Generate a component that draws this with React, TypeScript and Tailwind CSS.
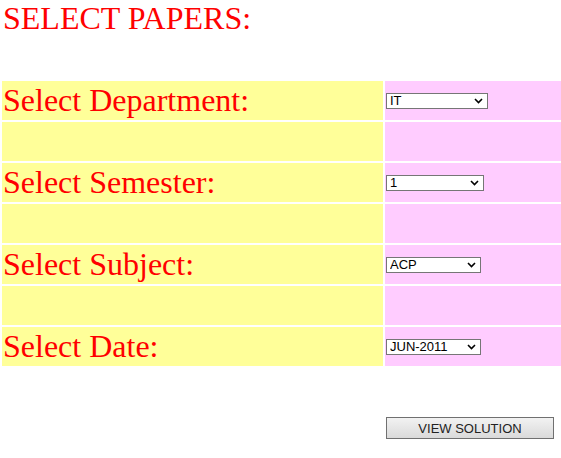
const rows = [
  { label: "Select Department:", value: "IT", options: ["IT", "CE", "EC", "ME"], w: "w-[102px]" },
  { label: "Select Semester:", value: "1", options: ["1", "2", "3", "4", "5", "6", "7", "8"], w: "w-[98px]" },
  { label: "Select Subject:", value: "ACP", options: ["ACP", "DBMS", "OS"], w: "w-[95px]" },
  { label: "Select Date:", value: "JUN-2011", options: ["JUN-2011", "DEC-2011"], w: "w-[95px]" },
];

function Dropdown({ value, options, w }: { value: string; options: string[]; w: string }) {
  return (
    <div className={`relative ${w} h-[16px]`}>
      <select
        defaultValue={value}
        className="block appearance-none w-full h-[16px] border border-[#767676] bg-white pl-[3px] pr-4 py-0 text-[13px] leading-[14px] text-black outline-none"
        style={{ fontFamily: '"Liberation Sans", Arial, sans-serif' }}
      >
        {options.map((o) => (
          <option key={o}>{o}</option>
        ))}
      </select>
      <svg
        className="absolute right-[5px] top-[5px] pointer-events-none"
        width="9"
        height="6"
        viewBox="0 0 9 6"
      >
        <polyline points="1,1 4.5,4.5 8,1" fill="none" stroke="#000" strokeWidth="1.6" />
      </svg>
    </div>
  );
}

export default function App() {
  return (
    <div className="w-[561px] overflow-hidden bg-white" style={{ fontFamily: '"Liberation Serif", "Times New Roman", serif' }}>
      <h1 className="text-[32px] leading-[37px] text-[#ff0000] pl-[3px]">SELECT PAPERS:</h1>
      <table className="mt-[42px] w-[563px] border-separate border-spacing-[2px]">
        <tbody>
          {rows.map((r) => (
            <>
              <tr key={r.label} className="h-[39px]">
                <td className="w-[381px] bg-[#ffff99] p-0 pl-[1px] align-middle text-[32px] leading-[37px] text-[#ff0000]">
                  {r.label}
                </td>
                <td className="bg-[#ffccff] p-0 pl-[1px] align-middle">
                  <Dropdown value={r.value} options={r.options} w={r.w} />
                </td>
              </tr>
              {r.label !== "Select Date:" && (
                <tr key={r.label + "-gap"} className="h-[39px]">
                  <td className="bg-[#ffff99] p-0"></td>
                  <td className="bg-[#ffccff] p-0"></td>
                </tr>
              )}
            </>
          ))}
          <tr className="h-[39px]">
            <td className="p-0"></td>
            <td className="p-0"></td>
          </tr>
          <tr className="h-[38px]">
            <td className="p-0"></td>
            <td className="p-0 pl-[1px] align-middle">
              <button
                className="block w-[168px] h-[22px] border border-[#707070] bg-gradient-to-b from-[#f2f2f2] to-[#dadada] text-[13px] text-[#222] leading-none"
                style={{ fontFamily: '"Liberation Sans", Arial, sans-serif' }}
              >
                VIEW SOLUTION
              </button>
            </td>
          </tr>
        </tbody>
      </table>
    </div>
  );
}
